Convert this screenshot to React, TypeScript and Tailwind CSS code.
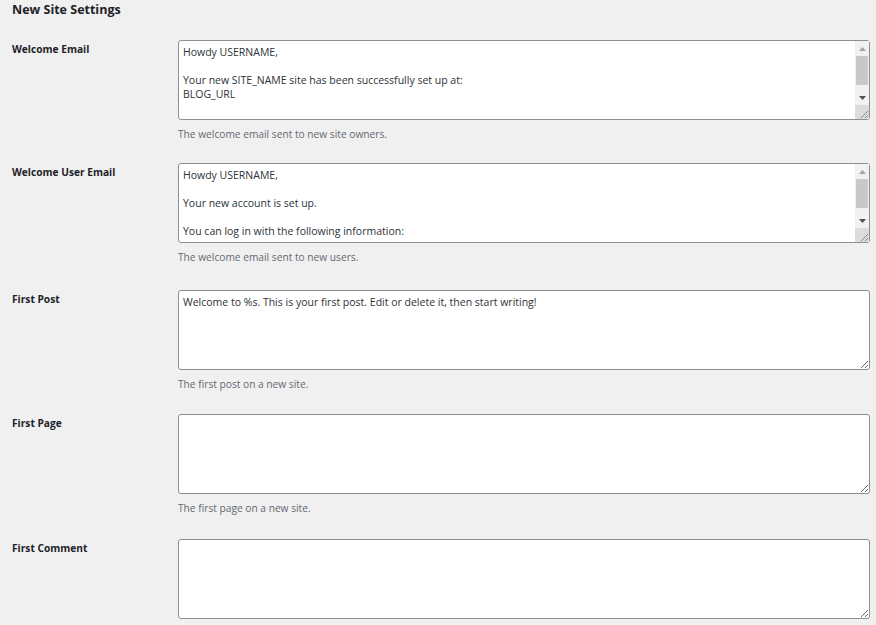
// only the lines that show in the box; the rest sits below the fold
const welcomeEmail = `Howdy USERNAME,

Your new SITE_NAME site has been successfully set up at:
BLOG_URL
`

const welcomeUserEmail = `Howdy USERNAME,

Your new account is set up.

You can log in with the following information:`

const rows = [
  {
    label: 'Welcome Email',
    value: welcomeEmail,
    desc: 'The welcome email sent to new site owners.',
    scroll: true,
    gap: 'pb-[22px]',
  },
  {
    label: 'Welcome User Email',
    value: welcomeUserEmail,
    desc: 'The welcome email sent to new users.',
    scroll: true,
    gap: 'pb-[26px]',
  },
  {
    label: 'First Post',
    value: 'Welcome to %s. This is your first post. Edit or delete it, then start writing!',
    desc: 'The first post on a new site.',
    scroll: false,
    gap: 'pb-[23px]',
  },
  { label: 'First Page', value: '', desc: 'The first page on a new site.', scroll: false, gap: 'pb-[24px]' },
  { label: 'First Comment', value: '', desc: '', scroll: false, gap: 'pb-[24px]' },
]

// fake classic scrollbar, the headless browser hides native ones
function Scrollbar() {
  return (
    <div className="absolute right-[1px] top-[1px] bottom-[1px] flex w-[14px] flex-col bg-[#f1f1f1]">
      <div className="flex h-[15px] items-center justify-center">
        <svg width="7" height="4" viewBox="0 0 7 4">
          <path d="M0 4 L3.5 0 L7 4 Z" fill="#a3a3a3" />
        </svg>
      </div>
      <div className="flex-1">
        <div className="mx-[1px] h-[29px] bg-[#c8c8c8]" />
      </div>
      <div className="flex h-[15px] items-center justify-center">
        <svg width="7" height="4" viewBox="0 0 7 4">
          <path d="M0 0 L7 0 L3.5 4 Z" fill="#505050" />
        </svg>
      </div>
      <div className="relative h-[14px] bg-[#dcdcdc]">
        <svg className="absolute right-0 bottom-0" width="10" height="10" viewBox="0 0 10 10">
          <path d="M9 2 L2 9 M9 6 L6 9" stroke="#8a8a8a" strokeWidth="1" />
        </svg>
      </div>
    </div>
  )
}

export default function App() {
  return (
    <div className="h-[625px] overflow-hidden bg-[#f0f0f1] pl-3 pr-[6px] pt-[2px] font-['Open_Sans',sans-serif] text-[#1d2327]">
      <h2 className="text-[12.5px] font-bold leading-4">New Site Settings</h2>
      <div className="mt-[22px]">
        {rows.map(row => (
          <div key={row.label} className={`flex ${row.gap}`}>
            <div className="w-[166px] shrink-0 pt-[1px] text-[10.2px] font-bold leading-4">{row.label}</div>
            <div className="flex-1">
              <div className="relative">
                <textarea
                  defaultValue={row.value}
                  spellCheck={false}
                  className={`block h-[80px] w-full rounded-[3px] border border-[#8c8f94] bg-white px-[4px] pt-[4px] pb-[3px] text-[10.5px] leading-[14px] text-[#2c3338] outline-none ${row.scroll ? 'resize-none overflow-hidden pr-[20px]' : ''}`}
                />
                {row.scroll && <Scrollbar />}
              </div>
              {row.desc && (
                <p className="mt-[7px] text-[10.2px] leading-[14px] text-[#646970]">{row.desc}</p>
              )}
            </div>
          </div>
        ))}
      </div>
    </div>
  )
}
